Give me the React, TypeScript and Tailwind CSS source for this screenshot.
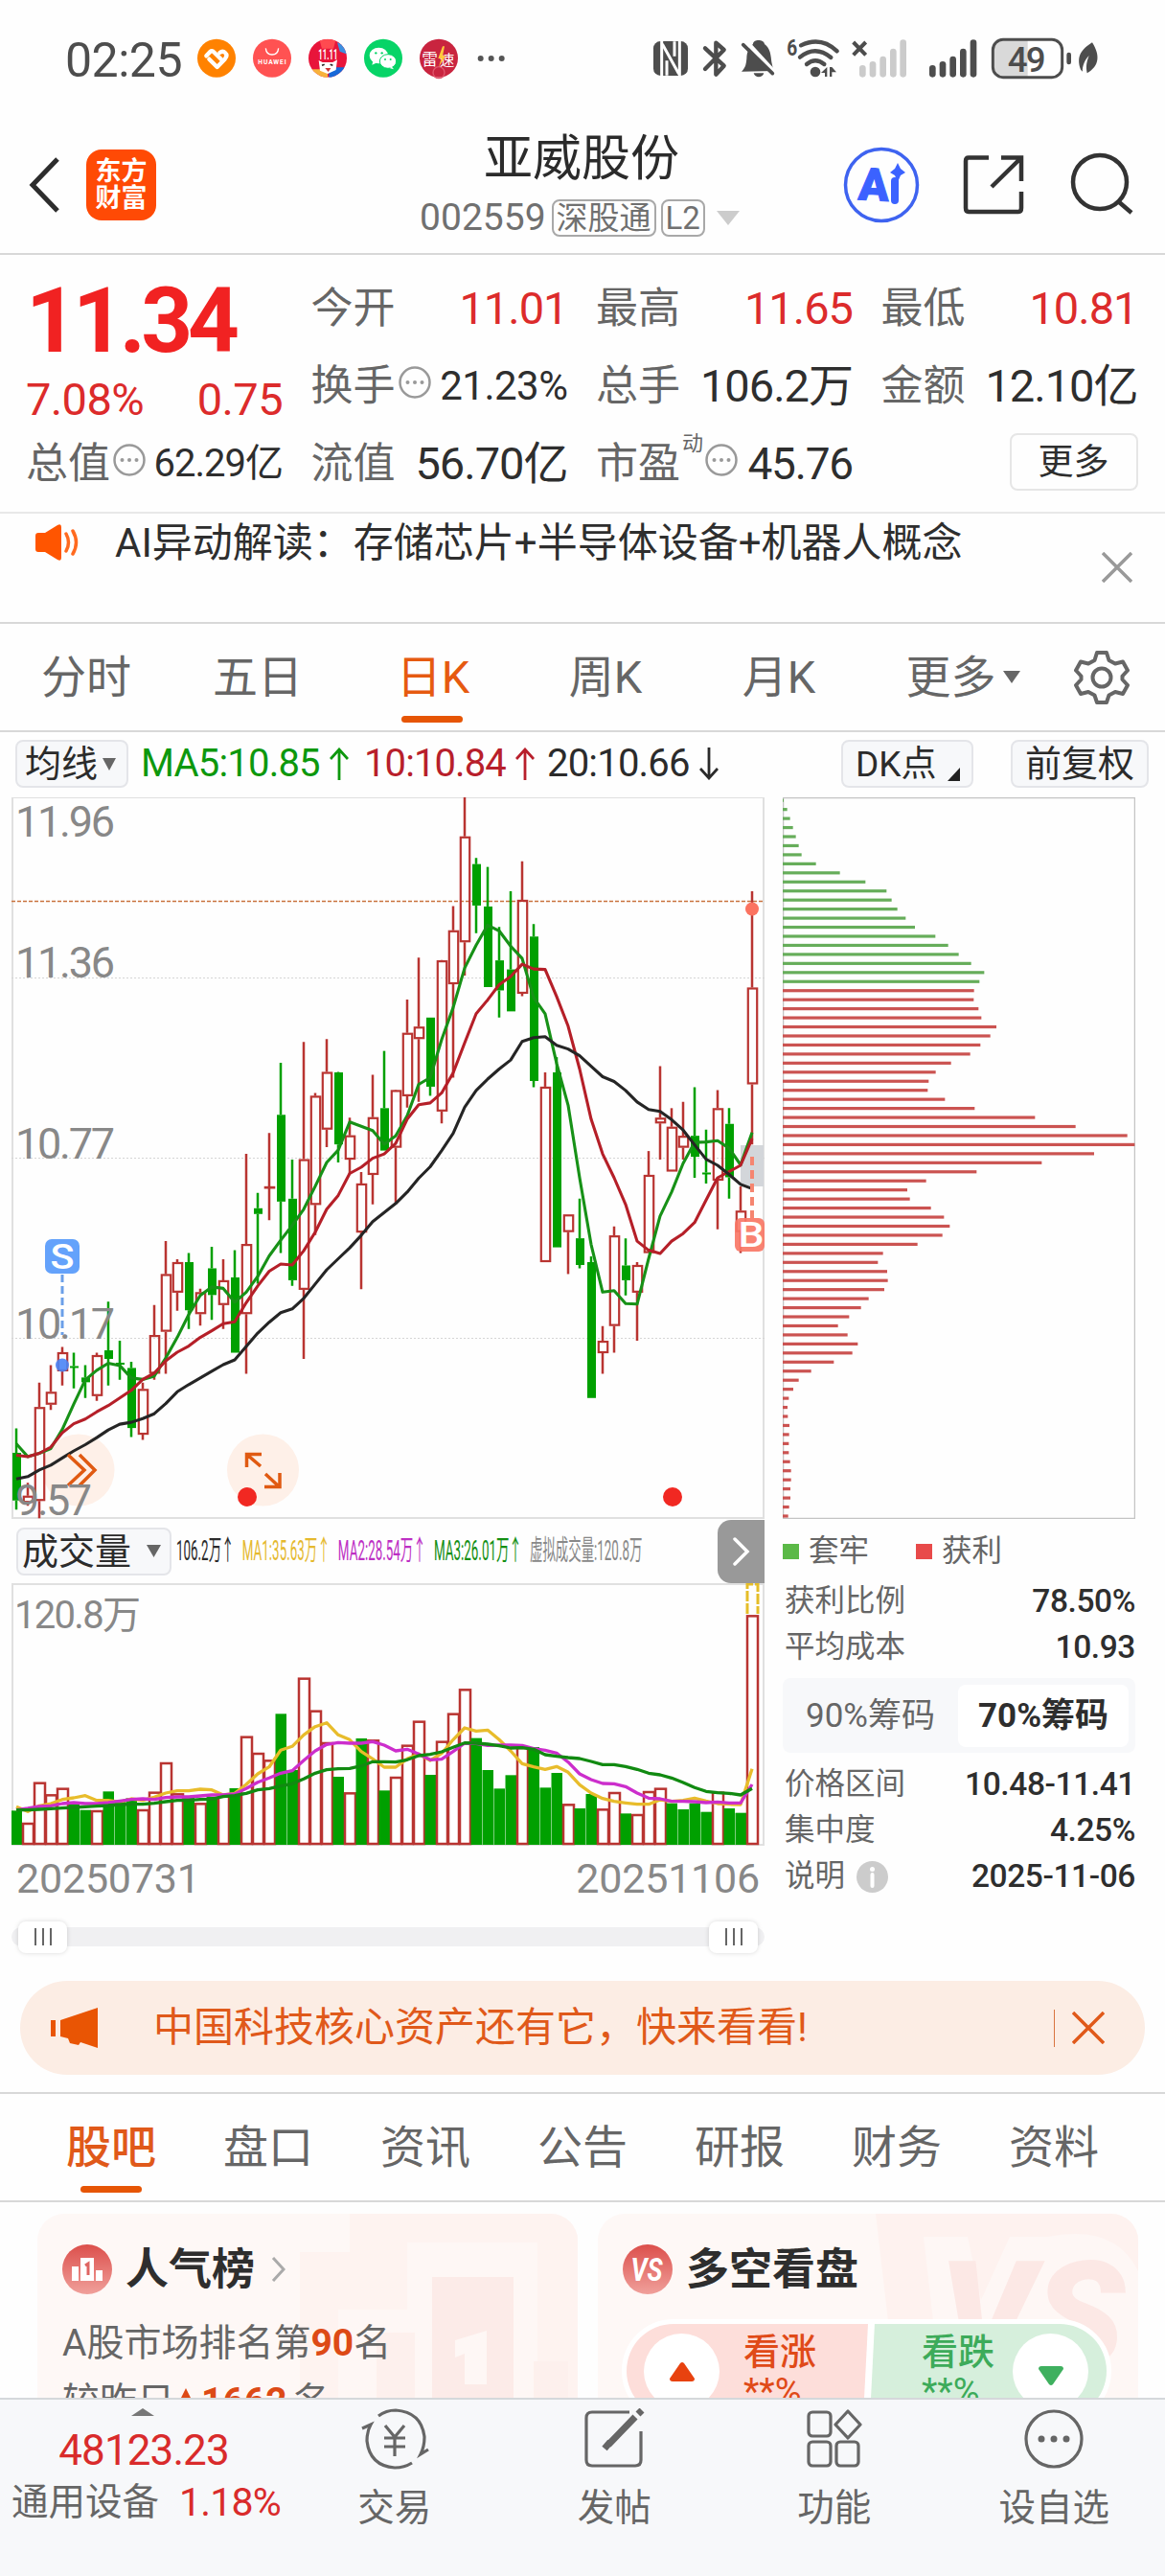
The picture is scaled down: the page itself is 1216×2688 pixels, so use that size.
import type { ReactNode } from "react"
import clsx from "clsx"

type Candle = [color: "R" | "G", high: number, top: number, bottom: number, low: number]

// high / body top / body bottom / low, measured on the 22..1534 price scale
const CANDLES: Candle[] = [
  ["G", 1346, 1397, 1497, 1516], ["R", 1460, 1487, 1502, 1508], ["R", 1250, 1301, 1498, 1534],
  ["R", 1213, 1269, 1296, 1307], ["R", 1175, 1186, 1226, 1256], ["G", 1187, 1215, 1218, 1262],
  ["G", 1213, 1239, 1249, 1282], ["R", 1187, 1192, 1278, 1288], ["G", 1080, 1182, 1200, 1256],
  ["G", 1162, 1208, 1212, 1244], ["G", 1206, 1219, 1345, 1364], ["R", 1250, 1263, 1359, 1370],
  ["R", 1087, 1150, 1231, 1244], ["R", 953, 1022, 1143, 1231], ["R", 991, 997, 1061, 1099],
  ["G", 978, 997, 1098, 1137], ["R", 1053, 1060, 1106, 1130], ["G", 965, 1010, 1066, 1118],
  ["R", 991, 1035, 1087, 1137], ["G", 972, 1029, 1187, 1187], ["R", 770, 959, 1106, 1231],
  ["G", 852, 884, 896, 1042], ["R", 726, 838, 840, 909], ["G", 579, 688, 870, 978],
  ["G", 782, 864, 1035, 1047], ["R", 535, 781, 1055, 1200], ["R", 642, 648, 877, 940],
  ["R", 529, 598, 719, 756], ["G", 598, 599, 750, 788], ["R", 694, 731, 782, 812],
  ["R", 808, 832, 935, 1054], ["R", 604, 693, 814, 876], ["G", 554, 674, 763, 763],
  ["R", 635, 636, 757, 872], ["R", 446, 516, 649, 673], ["R", 358, 503, 529, 661],
  ["G", 484, 484, 629, 648], ["R", 363, 364, 681, 706], ["R", 250, 301, 414, 610],
  ["R", 22, 104, 326, 396], ["G", 149, 162, 249, 307], ["G", 168, 251, 420, 420],
  ["G", 294, 364, 427, 484], ["G", 219, 383, 471, 471], ["R", 156, 237, 434, 439],
  ["G", 288, 314, 617, 630], ["R", 599, 629, 997, 997], ["G", 567, 599, 966, 966],
  ["R", 897, 897, 934, 1022], ["G", 864, 947, 1003, 1010], ["G", 985, 997, 1282, 1282],
  ["R", 1131, 1162, 1188, 1231], ["R", 922, 941, 1131, 1187], ["G", 947, 1004, 1035, 1067],
  ["R", 997, 1003, 1061, 1162], ["R", 764, 814, 978, 978], ["R", 586, 694, 706, 782],
  ["R", 674, 713, 807, 807], ["R", 661, 732, 757, 782], ["G", 630, 732, 776, 820],
  ["G", 719, 809, 812, 832], ["R", 636, 674, 826, 928], ["G", 674, 707, 819, 864],
  ["R", 838, 889, 934, 978], ["R", 219, 421, 624, 750],
]

const MA5 = [
  1378, 1405, 1398, 1388, 1348, 1295, 1244, 1224, 1209, 1214, 1240, 1243, 1236, 1198, 1155, 1107,
  1067, 1049, 1052, 1081, 1060, 1027, 984, 951, 920, 886, 838, 788, 762, 703, 712, 721, 750, 732,
  690, 624, 610, 530, 463, 380, 332, 290, 302, 334, 360, 442, 476, 580, 668, 820, 960, 1060, 1057,
  1084, 1085, 990, 900, 850, 790, 746, 745, 742, 758, 793, 725,
]
const MA10 = [
  1402, 1405, 1398, 1385, 1355, 1336, 1326, 1311, 1298, 1282, 1266, 1243, 1230, 1204, 1186, 1173,
  1155, 1141, 1126, 1122, 1082, 1047, 1016, 1001, 1003, 973, 934, 886, 857, 811, 798, 779, 770,
  748, 697, 667, 663, 642, 600, 537, 476, 447, 415, 398, 372, 382, 383, 440, 502, 592, 697, 770,
  820, 876, 953, 972, 979, 953, 937, 914, 867, 820, 807, 794, 738,
]
const MA20 = [
  1452, 1447, 1433, 1423, 1408, 1393, 1380, 1365, 1349, 1337, 1333, 1325, 1315, 1294, 1269, 1254,
  1240, 1226, 1212, 1202, 1174, 1146, 1123, 1103, 1095, 1073, 1043, 1013, 990, 967, 941, 912, 893,
  874, 850, 821, 797, 763, 727, 672, 637, 613, 592, 573, 534, 526, 524, 542, 550, 564, 586, 608,
  618, 637, 661, 677, 681, 698, 720, 751, 781, 794, 813, 834, 843,
]

const VOLUME_COLORS = "GRRRRGGRGGGRRRRGRGRGRRRGGRRRGRGRGRRRGRRRGGGGRGGGRGGRRGRRRGGGGRGGR"
const VOLUMES = [
  927, 965, 838, 876, 856, 900, 925, 926, 867, 897, 888, 923, 868, 776, 873, 886, 903, 884, 880,
  857, 694, 746, 768, 624, 800, 511, 613, 713, 821, 870, 701, 705, 864, 821, 721, 646, 815, 709,
  622, 546, 700, 800, 858, 816, 728, 728, 855, 809, 906, 920, 875, 921, 869, 936, 938, 866, 856,
  904, 923, 904, 931, 868, 920, 934, 315,
]
const VOL_MA1 = [
  915, 930, 912, 905, 892, 887, 880, 895, 895, 900, 890, 895, 885, 872, 865, 865, 860, 862, 878,
  873, 845, 812, 790, 738, 726, 690, 664, 652, 690, 705, 742, 765, 791, 791, 765, 750, 770, 748,
  705, 668, 678, 675, 705, 740, 780, 790, 798, 789, 807, 846, 872, 889, 898, 903, 907, 907, 893,
  898, 895, 888, 897, 905, 907, 908, 796,
]
const VOL_MA2 = [
  925, 920, 914, 912, 905, 902, 905, 905, 902, 897, 892, 890, 892, 886, 884, 884, 881, 878, 878,
  875, 858, 838, 825, 810, 802, 770, 740, 720, 714, 716, 716, 711, 722, 740, 735, 750, 768, 766,
  742, 716, 717, 723, 722, 722, 723, 733, 738, 747, 775, 812, 830, 842, 843, 852, 872, 888, 890,
  898, 898, 899, 902, 900, 903, 903, 845,
]
const VOL_MA3 = [
  925, 925, 923, 921, 919, 917, 915, 913, 911, 908, 907, 907, 904, 899, 895, 895, 892, 891, 883,
  880, 873, 862, 858, 850, 843, 828, 810, 799, 796, 795, 787, 774, 774, 775, 768, 755, 751, 743,
  729, 715, 716, 719, 724, 731, 730, 735, 752, 757, 761, 764, 773, 783, 783, 789, 798, 810, 815,
  825, 839, 855, 867, 871, 873, 878, 858,
]

// first 21 levels are above the current price
const CHIPS = [
  3, 14, 23, 32, 41, 50, 59, 104, 179, 259, 325, 341, 359, 385, 414, 478, 518, 551, 590, 631, 616,
  599, 598, 613, 622, 669, 650, 619, 587, 527, 479, 457, 454, 508, 601, 790, 917, 1079, 1102, 975,
  811, 607, 449, 390, 398, 464, 505, 523, 500, 422, 314, 298, 327, 329, 318, 269, 245, 208, 173,
  203, 235, 218, 160, 89, 50, 33, 19, 15, 16, 21, 20, 19, 19, 23, 26, 26, 24, 24, 20, 17,
]

const barX = (i: number) => 5 + 12 * i
const priceY = (v: number) => (v - 22) / 2.0103
const volumeY = (v: number) => (v - 215) / 3
const points = (values: number[], y: (v: number) => number) =>
  values.map((v, i) => `${barX(i)},${y(v).toFixed(1)}`).join(" ")

const RED = "#b93431"
const GREEN = "#00a000"

function Text({ className, children }: { className?: string; children: ReactNode }) {
  return <span className={clsx("whitespace-nowrap leading-none", className)}>{children}</span>
}

function StatusBar() {
  return (
    <div className="flex h-[122px] shrink-0 items-start justify-between pl-[68px] pr-[46px] pt-[30px]">
      <div className="flex h-[65px] items-center">
        <Text className="w-[132px] text-[50px] tracking-[-0.5px] text-[#4d4d4d]">02:25</Text>
        <svg width="340" height="55" viewBox="0 0 1020 165">
          <circle cx="78" cy="77" r="60" fill="#ff8200" />
          <g stroke="#fff" strokeWidth="13" strokeLinecap="round" strokeLinejoin="round" fill="none">
            <path d="M46 70L58 57Q64 52 71 59L96 84" />
            <path d="M55 80L80 105L104 80Q114 68 105 60Q97 52 88 60" />
          </g>
          <circle cx="252" cy="77" r="60" fill="#ff5252" />
          <path d="M232 46Q234 66 252 66Q270 66 272 46" fill="none" stroke="#fff" strokeWidth="4" />
          <text x="252" y="96" fill="#fff" fontSize="20" fontWeight="700" textAnchor="middle" textLength="88">HUAWEI</text>
          <clipPath id="sale"><circle cx="426" cy="77" r="60" /></clipPath>
          <g clipPath="url(#sale)">
            <rect x="366" y="17" width="120" height="120" fill="#e8153a" />
            <path d="M400 17h52l-8 30h-36z" fill="#ff4a50" />
            <path d="M456 28l34 14v24l-26-10z" fill="#3c8fe0" />
            <path d="M366 112h60v30h-60z" fill="#f7b23c" />
            <path d="M430 106h56v32h-56z" fill="#1668d8" />
            <path d="M398 84l12 6h32l14-8-4 32-26 12-24-10z" fill="#fff" />
            <path d="M408 100l8-3M434 97l8 3" stroke="#222" strokeWidth="5" />
            <path d="M418 108h18l-8 12z" fill="#c33" />
            <text x="427" y="80" fill="#fff" fontSize="42" fontWeight="700" textAnchor="middle" textLength="60" lengthAdjust="spacingAndGlyphs">11.11</text>
          </g>
          <circle cx="600" cy="77" r="60" fill="#07d467" />
          <ellipse cx="586" cy="69" rx="29" ry="25" fill="#fff" />
          <path d="M568 86l-3 12 13-6z" fill="#fff" />
          <ellipse cx="615" cy="87" rx="26" ry="22" fill="#fff" stroke="#07d467" strokeWidth="3" />
          <path d="M627 104l6 8-14-4z" fill="#fff" />
          <g fill="#07d467">
            <circle cx="577" cy="61" r="3.5" /><circle cx="596" cy="61" r="3.5" />
            <circle cx="606" cy="81" r="3" /><circle cx="623" cy="81" r="3" />
          </g>
          <circle cx="774" cy="77" r="60" fill="#c9243f" />
          <circle cx="774" cy="122" r="18" fill="none" stroke="#e0566c" strokeWidth="4" />
          <text x="746" y="98" fill="#fff" fontSize="50" textAnchor="middle" textLength="46">雷</text>
          <text x="800" y="98" fill="#fff" fontSize="46" textAnchor="middle" textLength="42">速</text>
          <path d="M786 40l-14 38h10l-8 26 22-34h-10l6-30z" fill="#ffc93c" />
          <g fill="#555"><circle cx="905" cy="78" r="9" /><circle cx="938" cy="78" r="9" /><circle cx="971" cy="78" r="9" /></g>
        </svg>
      </div>
      <svg width="500" height="65" viewBox="0 0 1500 195" fill="#4d4d4d">
        <rect x="36" y="39" width="108" height="108" rx="22" />
        <path d="M62 153V36M118 33V150" stroke="#fff" strokeWidth="9" />
        <path d="M64 48L116 142M78 100V146M102 40V86" stroke="#fff" strokeWidth="9" fill="none" />
        <path d="M198 61L257 116L232 143V44L257 66L198 126" fill="none" stroke="#4d4d4d" strokeWidth="13" strokeLinecap="round" strokeLinejoin="round" />
        <path d="M312 134c14-14 14-24 16-40 0-22 8-36 20-46 0-16 34-16 36 0 18 12 20 36 22 56l6 28zM350 139h32c-4 16-28 16-32 0z" />
        <path d="M330 44L418 140" stroke="#fff" strokeWidth="14" />
        <path d="M317 50L409 140" stroke="#4d4d4d" strokeWidth="11" strokeLinecap="round" />
        <text x="454" y="84" fontSize="72" fontWeight="700" textLength="33" lengthAdjust="spacingAndGlyphs">6</text>
        <g fill="none" stroke="#4d4d4d" strokeWidth="13" strokeLinecap="round">
          <path d="M498 52Q560 22 611 70" /><path d="M495 89Q543 50 592 90" /><path d="M516 111Q543 88 571 111" />
        </g>
        <circle cx="543" cy="135" r="16" />
        <path d="M580 120v30h-7v-12h-12zM588 120h7l14 16h-14v14h-7z" />
        <path d="M662 42L701 82M701 42L662 82" stroke="#4d4d4d" strokeWidth="12" />
        <g fill="#cbcbcb">
          <rect x="681" y="114" width="20" height="38" rx="10" /><rect x="713" y="102" width="20" height="50" rx="10" />
          <rect x="745" y="86" width="20" height="66" rx="10" /><rect x="777" y="62" width="20" height="90" rx="10" />
          <rect x="808" y="34" width="20" height="118" rx="10" />
        </g>
        <rect x="900" y="114" width="20" height="38" rx="10" /><rect x="932" y="102" width="20" height="50" rx="10" />
        <rect x="964" y="86" width="20" height="66" rx="10" /><rect x="996" y="62" width="20" height="90" rx="10" />
        <rect x="1028" y="34" width="20" height="118" rx="10" />
        <path d="M1130 35H1208V151H1130Q1100 151 1100 120V65Q1100 35 1130 35Z" fill="#d9d9d9" />
        <rect x="1099" y="34" width="217" height="118" rx="32" fill="none" stroke="#4d4d4d" strokeWidth="9" />
        <text x="1205" y="134" fontSize="110" fontWeight="500" textAnchor="middle" textLength="120">49</text>
        <rect x="1330" y="74" width="14" height="38" rx="7" />
        <path d="M1410 43C1380 62 1358 84 1374 128L1380 134C1378 118 1388 96 1400 84C1392 104 1390 118 1394 139C1432 118 1436 84 1410 43Z" />
      </svg>
    </div>
  )
}

function Header() {
  return (
    <div className="flex h-[144px] shrink-0 items-center border-b-2 border-[#d8d8d8]">
      <svg width="34" height="60" viewBox="0 0 34 60" className="ml-[29px]" fill="none" stroke="#2d2d2d" strokeWidth="5">
        <path d="M31 3L5 30L31 57" />
      </svg>
      <div className="ml-[27px] flex h-[74px] w-[73px] flex-col items-center justify-center gap-px rounded-2xl bg-[#ff4a05] font-bold text-white">
        <Text className="text-[27px]">东方</Text>
        <Text className="text-[27px]">财富</Text>
      </div>
      <div className="ml-[216px] flex w-[456px] flex-col items-center">
        <Text className="text-[51px] text-[#2b2b2b]">亚威股份</Text>
        <div className="mt-[17px] flex h-[39px] items-center text-[#707070]">
          <Text className="text-[39px]">002559</Text>
          <Text className="ml-[6px] rounded-lg border-2 border-[#a8a8a8] px-[3px] py-px text-[33px]">深股通</Text>
          <Text className="ml-[5px] rounded-lg border-2 border-[#a8a8a8] px-[3px] py-px text-[33px]">L2</Text>
          <svg width="24" height="15" className="ml-3 mr-[4px]"><path d="M0 0H24L12 15Z" fill="#ccc" /></svg>
        </div>
      </div>
      <svg width="310" height="84" viewBox="880 151 310 84" className="ml-[44px]" fill="none">
        <circle cx="921" cy="193" r="37.5" stroke="#3e63f0" strokeWidth="3.5" />
        <text x="897" y="209" fill="#3b62ff" stroke="#3b62ff" fontSize="47" fontWeight="900" transform="rotate(3 912 193)">A</text>
        <path d="M935 189v20" stroke="#3b62ff" strokeWidth="8" strokeLinecap="round" />
        <path d="M938 170l3 6 5 4-5 3-3 7-3-7-5-3 5-4z" fill="#3b62ff" />
        <path d="M1033 164.500H1012Q1009 164.500 1009 168V217Q1009 221 1012 221H1064Q1067 221 1067 217V200M1046 164.500H1067V189M1066 165.500L1036 195" stroke="#333" strokeWidth="4.500" />
        <circle cx="1149" cy="190" r="28" stroke="#333" strokeWidth="4.500" />
        <path d="M1168 210L1182 222" stroke="#333" strokeWidth="4.500" />
      </svg>
    </div>
  )
}

function MoreDots() {
  return (
    <svg width="34" height="34" className="shrink-0">
      <circle cx="17" cy="17" r="15.500" fill="none" stroke="#999" strokeWidth="2.500" />
      <g fill="#999"><circle cx="9.500" cy="17" r="2" /><circle cx="17" cy="17" r="2" /><circle cx="24.500" cy="17" r="2" /></g>
    </svg>
  )
}

type QuoteProps = { label: string; value: string; red?: boolean; dots?: boolean; valueSize?: string }

function Quote({ label, value, red, dots, valueSize = "text-[47px] tracking-[-1px]" }: QuoteProps) {
  return (
    <div className="flex h-[81px] items-center">
      <Text className="text-[44px] text-[#666]">{label}</Text>
      {dots && <div className="mb-2 ml-[3px]"><MoreDots /></div>}
      <Text className={clsx("ml-auto", valueSize, red ? "text-[#dc2b2b]" : "text-[#2e2e2e]")}>{value}</Text>
    </div>
  )
}

function QuotePanel() {
  return (
    <div className="flex h-[270px] shrink-0 gap-[29.500px] border-b-2 border-[#e8e8e8] pl-[27px] pt-[15px]">
      <div className="w-[268px]">
        <div className="flex h-[108px] items-center">
          <Text className="text-[94px] font-bold tracking-[-5px] text-[#f12222]">11.34</Text>
        </div>
        <div className="flex h-[54px] items-center justify-between text-[47px] tracking-[-0.6px] text-[#dc2b2b]">
          <Text>7.08%</Text>
          <Text>0.75</Text>
        </div>
        <Quote label="总值" value="62.29亿" dots valueSize="text-[40px] tracking-[-1px]" />
      </div>
      <div className="w-[268px]">
        <Quote label="今开" value="11.01" red />
        <Quote label="换手" value="21.23%" dots valueSize="text-[42px] tracking-[-0.5px]" />
        <Quote label="流值" value="56.70亿" />
      </div>
      <div className="w-[268px]">
        <Quote label="最高" value="11.65" red />
        <Quote label="总手" value="106.2万" />
        <div className="flex h-[81px] items-center">
          <Text className="text-[44px] text-[#666]">市盈</Text>
          <Text className="mb-[42px] ml-[2px] text-[22px] text-[#666]">动</Text>
          <div className="mb-2 ml-[2px]"><MoreDots /></div>
          <Text className="ml-auto text-[46px] tracking-[-1.2px] text-[#2e2e2e]">45.76</Text>
        </div>
      </div>
      <div className="w-[268px]">
        <Quote label="最低" value="10.81" red />
        <Quote label="金额" value="12.10亿" />
        <div className="flex h-[81px] items-center justify-end">
          <button className="mb-[3px] flex h-[60px] w-[134px] items-center justify-center rounded-lg border-2 border-[#e6e6e6]">
            <Text className="text-[37px] text-[#2e2e2e]">更多</Text>
          </button>
        </div>
      </div>
    </div>
  )
}

function Notice() {
  return (
    <div className="flex h-[115px] shrink-0 items-start border-b-2 border-[#d8d8d8] pl-[37px]">
      <svg width="46" height="38" viewBox="0 0 46 38" className="mt-[11px]">
        <path d="M0 12Q0 9 3 9H10L23 1Q27 -1 27 3V35Q27 39 23 37L10 29H3Q0 29 0 26Z" fill="#ff5500" />
        <path d="M32 10Q37 19 32 28M39 7Q46 19 39 31" fill="none" stroke="#ff6a1f" strokeWidth="3.500" strokeLinecap="round" />
      </svg>
      <Text className="ml-[37px] mt-[10px] text-[42px] text-[#2e2e2e]">AI异动解读：存储芯片+半导体设备+机器人概念</Text>
      <svg width="32" height="32" className="ml-auto mr-[34px] mt-[40px]"><path d="M1 1L31 31M31 1L1 31" stroke="#999" strokeWidth="3.500" /></svg>
    </div>
  )
}

function PeriodTabs() {
  return (
    <div className="flex h-[113px] shrink-0 items-center border-b-2 border-[#d8d8d8] text-[47px] text-[#666]">
      <Text className="w-[180px] text-center">分时</Text>
      <Text className="w-[178px] text-center">五日</Text>
      <div className="relative flex h-full w-[184px] items-center justify-center text-[#e65a10]">
        <Text className="pl-1">日K</Text>
        <div className="absolute bottom-[8px] left-[61px] h-[7px] w-[64px] rounded-full bg-[#e65505]" />
      </div>
      <Text className="w-[180px] text-center">周K</Text>
      <Text className="w-[182px] text-center">月K</Text>
      <div className="flex w-[202px] items-center justify-center gap-[7px]">
        <Text>更多</Text>
        <svg width="18" height="13"><path d="M0 0H18L9 13Z" fill="#666" /></svg>
      </div>
      <svg width="58" height="58" viewBox="0 0 58 58" className="ml-[15px]" fill="none" stroke="#666" strokeWidth="4" strokeLinejoin="round">
        <path d="M24 3H34L36.500 11L43 14.500L51 12.500L56 21.500L50.500 27.500V31L56 37L51 46L43 44L36.500 47.500L34 55H24L21.500 47.500L15 44L7 46L2 37L7.500 31V27.500L2 21.500L7 12.500L15 14.500L21.500 11Z" />
        <circle cx="29" cy="29" r="9.500" />
      </svg>
    </div>
  )
}

const chip = "flex items-center rounded-lg border-2 border-[#e4e5e9] bg-[#f7f8fa] text-[#2b2b2b]"

function Arrow({ down }: { down?: boolean }) {
  return (
    <svg width="20" height="34" viewBox="0 0 20 34" className={clsx("ml-[10px]", down && "rotate-180")} fill="none" stroke="currentColor" strokeWidth="2.800">
      <path d="M10 34V2M1 12L10 2L19 12" />
    </svg>
  )
}

function AverageRow() {
  return (
    <div className="flex h-[68px] shrink-0 items-center pb-[2px] pl-[16px]">
      <div className={clsx(chip, "h-[50px] w-[118px] pl-[8px]")}>
        <Text className="text-[38px]">均线</Text>
        <svg width="14" height="13" className="ml-[5px]"><path d="M0 0H14L7 13Z" fill="#666" /></svg>
      </div>
      <div className="ml-[13px] flex w-[233px] items-center text-[#0d980d]">
        <Text className="text-[40px] tracking-[-0.8px]">MA5:10.85</Text><Arrow />
      </div>
      <div className="flex w-[191px] items-center text-[#b81f2b]">
        <Text className="text-[40px] tracking-[-0.9px]">10:10.84</Text><Arrow />
      </div>
      <div className="flex w-[307px] items-center text-[#2b2b2b]">
        <Text className="text-[40px] tracking-[-0.8px]">20:10.66</Text><Arrow down />
      </div>
      <div className={clsx(chip, "h-[50px] w-[138px] pl-[13px]")}>
        <Text className="text-[37px]">DK点</Text>
        <svg width="13" height="14" className="ml-[11px] mt-[22px]"><path d="M13 0V14H0Z" fill="#222" /></svg>
      </div>
      <div className={clsx(chip, "ml-[39px] h-[50px] w-[144px] justify-center")}>
        <Text className="text-[38px]">前复权</Text>
      </div>
    </div>
  )
}

function CandleShape({ candle, x }: { candle: Candle; x: number }) {
  const [color, high, top, bottom, low] = candle
  const [h, t, b, l] = [high, top, bottom, low].map(priceY)
  const stroke = color === "R" ? RED : GREEN
  return (
    <g stroke={stroke}>
      <path d={`M${x} ${h}V${t}M${x} ${b}V${l}`} strokeWidth="2.500" />
      {color === "R" ? (
        <rect x={x - 4.2} y={t + 1} width="9.4" height={Math.max(b - t - 2, 0.5)} fill="none" strokeWidth="2.200" />
      ) : (
        <rect x={x - 4} y={t} width="9" height={Math.max(b - t, 2)} fill={GREEN} stroke="none" />
      )}
    </g>
  )
}

function PriceChart() {
  return (
    <svg width="786" height="753" viewBox="0 0 786 753" fill="none">
      <rect x="1" y="0" width="784" height="752" stroke="#e0e0e0" strokeWidth="2" />
      <g stroke="#d5d5d5" strokeDasharray="2 2">
        <path d="M0 188.500H786M0 376.500H786M0 564.500H786" />
      </g>
      <path d="M0 108.500H786" stroke="#c9733f" strokeWidth="1.300" strokeDasharray="4 2" />
      <rect x="761" y="363" width="24" height="43" fill="#d3d6da" />
      <circle cx="70" cy="702" r="37.500" fill="#fef0e8" />
      {CANDLES.map((c, i) => <CandleShape key={i} candle={c} x={barX(i)} />)}
      <g strokeWidth="3.100" strokeLinejoin="round">
        <polyline points={points(MA5, priceY)} stroke="#179117" />
        <polyline points={points(MA10, priceY)} stroke="#b51f28" />
        <polyline points={points(MA20, priceY)} stroke="#252525" />
      </g>
      <path d="M59 686L76 702L59 718M71 686L87 702L71 718" stroke="#e05a12" strokeWidth="3.500" />
      <circle cx="262.500" cy="702" r="37.500" fill="#fef0e8" />
      <path d="M261 685.500H245.500V699M246 686L260 698M280 705V719.500H264M279 719L265 706" stroke="#e05a12" strokeWidth="3.500" />
      <circle cx="246" cy="730" r="10" fill="#f12822" />
      <circle cx="690" cy="730" r="10" fill="#f12822" />
      <g fill="#888" fontSize="45">
        <text x="4" y="41" textLength="104">11.96</text>
        <text x="4" y="188" textLength="104">11.36</text>
        <text x="4" y="377" textLength="104">10.77</text>
        <text x="4" y="565" textLength="104">10.17</text>
        <text x="4" y="749" textLength="80">9.57</text>
      </g>
      <rect x="35" y="461" width="36" height="36" rx="7" fill="#64a2fb" />
      <text x="53" y="492" fontSize="37" fontWeight="500" fill="#fff" textAnchor="middle" textLength="25" lengthAdjust="spacingAndGlyphs">S</text>
      <path d="M53 498V561" stroke="#6b9fe8" strokeWidth="3" strokeDasharray="8 4" />
      <circle cx="53" cy="592.500" r="7" fill="#4a84f5" fillOpacity="0.900" />
      <circle cx="773" cy="116.500" r="7" fill="#fb7360" />
      <path d="M773 375V439" stroke="#f58570" strokeWidth="4" strokeDasharray="9 5" />
      <rect x="755" y="439" width="31" height="35" rx="6" fill="#f97766" fillOpacity="0.920" />
      <text x="772" y="469" fontSize="36" fontWeight="500" fill="#fff" textAnchor="middle" textLength="27" lengthAdjust="spacingAndGlyphs">B</text>
    </svg>
  )
}

function VolumeChart() {
  return (
    <svg width="786" height="274" viewBox="0 0 786 274" fill="none">
      <rect x="1" y="1" width="784" height="272" stroke="#e0e0e0" strokeWidth="2" />
      {VOLUMES.map((v, i) => {
        const y = volumeY(v)
        return VOLUME_COLORS[i] === "R" ? (
          <rect key={i} x={barX(i) - 5} y={y + 1} width="11" height={271 - y} fill="#fff" stroke={RED} strokeWidth="2.500" />
        ) : (
          <rect key={i} x={barX(i) - 5.5} y={y} width="11.5" height={273 - y} fill={GREEN} />
        )
      })}
      <path d="M768 32V1H779V32" stroke="#e5bd28" strokeWidth="3" strokeDasharray="11 2" />
      <g strokeWidth="3.300" strokeLinejoin="round">
        <polyline points={points(VOL_MA1, volumeY)} stroke="#e8bc2b" />
        <polyline points={points(VOL_MA2, volumeY)} stroke="#cc2ecc" />
        <polyline points={points(VOL_MA3, volumeY)} stroke="#118a11" />
      </g>
      <text x="3" y="47" fontSize="40" fill="#888" textLength="132">120.8万</text>
    </svg>
  )
}

function SliderHandle() {
  return (
    <div className="flex h-[33px] w-[51px] items-center justify-center gap-[6px] rounded-lg bg-white shadow-[0_0_5px_rgba(0,0,0,0.15)]">
      <div className="h-[18px] w-[2px] bg-[#666]" />
      <div className="h-[18px] w-[2px] bg-[#666]" />
      <div className="h-[18px] w-[2px] bg-[#666]" />
    </div>
  )
}

function ChipRow({ label, value }: { label: ReactNode; value: string }) {
  return (
    <div className="flex h-[48px] items-center justify-between">
      <Text className="flex items-center pl-[2px] text-[31.500px] text-[#666]">{label}</Text>
      <Text className="text-[33.500px] font-medium tracking-[-0.4px] text-[#2e2e2e]">{value}</Text>
    </div>
  )
}

function ChipPanel() {
  return (
    <div className="w-[368px]">
      <svg width="368" height="753" viewBox="0 0 368 753" className="block">
        <rect x="0.500" y="0.500" width="367" height="752" fill="none" stroke="#c4c4c4" strokeWidth="1.500" />
        {CHIPS.map((w, i) => (
          <rect key={i} x="0" y={1.6 + i * 9.453} width={w / 3} height="3.2" fill={i < 21 ? "#66ad5a" : "#cb5351"} />
        ))}
      </svg>
      <div className="flex h-[62px] items-center pt-[5px] text-[31.500px] text-[#666]">
        <div className="mr-[10px] h-[16px] w-[17px] bg-[#5bb947]" />
        <Text>套牢</Text>
        <div className="ml-[49px] mr-[10px] h-[16px] w-[17px] bg-[#e84a4a]" />
        <Text>获利</Text>
      </div>
      <ChipRow label="获利比例" value="78.50%" />
      <ChipRow label="平均成本" value="10.93" />
      <div className="mb-[9px] mt-[8px] flex h-[78px] items-center rounded-lg bg-[#f7f8fa]">
        <Text className="w-[183px] text-center text-[35px] text-[#666]">90%筹码</Text>
        <div className="flex h-[65px] w-[178px] items-center justify-center rounded-lg bg-white">
          <Text className="text-[35px] font-bold text-[#2e2e2e]">70%筹码</Text>
        </div>
      </div>
      <ChipRow label="价格区间" value="10.48-11.41" />
      <ChipRow label="集中度" value="4.25%" />
      <ChipRow
        label={
          <>
            说明
            <svg width="33" height="33" className="ml-[12px]">
              <circle cx="16.500" cy="16.500" r="16.500" fill="#ccc" />
              <path d="M16.500 14V26" stroke="#fff" strokeWidth="4" strokeLinecap="round" />
              <circle cx="16.500" cy="8.500" r="2.500" fill="#fff" />
            </svg>
          </>
        }
        value="2025-11-06"
      />
    </div>
  )
}

function Charts() {
  return (
    <div className="flex h-[1235px] shrink-0 gap-[19px] pl-[12px]">
      <div className="w-[786px]">
        <div className="h-[753px]"><PriceChart /></div>
        <div className="flex h-[67px] items-center">
          <div className={clsx(chip, "ml-[5px] h-[50px] w-[162px] shrink-0 pl-[4px]")}>
            <Text className="text-[38px]">成交量</Text>
            <svg width="15" height="13" className="ml-[16px]"><path d="M0 0H15L7.500 13Z" fill="#666" /></svg>
          </div>
          <div className="ml-[5px] flex w-[565px] shrink-0">
            <div className="flex origin-left scale-x-[0.462] gap-[18px] text-[29px]">
              <Text className="text-[#2b2b2b]">106.2万↑</Text>
              <Text className="text-[#e5b92e]">MA1:35.63万↑</Text>
              <Text className="text-[#bd2fc4]">MA2:28.54万↑</Text>
              <Text className="text-[#138f13]">MA3:26.01万↑</Text>
              <Text className="text-[#888]">虚拟成交量:120.8万</Text>
            </div>
          </div>
          <div className="flex h-[66px] w-[49px] shrink-0 items-center justify-center rounded-l-[14px] bg-[#999]">
            <svg width="18" height="30"><path d="M2 2L15 15L2 28" fill="none" stroke="#fff" strokeWidth="3.500" strokeLinecap="round" /></svg>
          </div>
        </div>
        <div className="h-[274px]"><VolumeChart /></div>
        <div className="flex h-[68px] items-center justify-between px-[5px] text-[43px] tracking-[-0.2px] text-[#888]">
          <Text>20250731</Text>
          <Text>20251106</Text>
        </div>
        <div className="mt-[17px] flex h-[20px] items-center justify-between rounded-full bg-[#f0f0f2] px-[7px]">
          <SliderHandle />
          <SliderHandle />
        </div>
      </div>
      <ChipPanel />
    </div>
  )
}

function Banner() {
  return (
    <div className="flex h-[118px] shrink-0 items-start border-b-2 border-[#d8d8d8]">
      <div className="ml-[21px] flex h-[98px] w-[1174px] items-center rounded-full bg-[#fcede4] text-[#e0591a]">
        <svg width="49" height="42" className="ml-[32px]" fill="#e95504">
          <path d="M0 13H5V30H0ZM10 13L49 0V42L31 36L29 39L20 37L18 32L10 30Z" />
        </svg>
        <Text className="ml-[58px] text-[42px]">中国科技核心资产还有它，快来看看!</Text>
        <div className="ml-auto h-[39px] w-px bg-[#d9753f]" />
        <svg width="34" height="34" className="ml-[18px] mr-[42px]"><path d="M1 1L33 33M33 1L1 33" stroke="#e0591a" strokeWidth="3.500" /></svg>
      </div>
    </div>
  )
}

function SectionTabs() {
  const tabs = ["股吧", "盘口", "资讯", "公告", "研报", "财务", "资料"]
  return (
    <div className="flex h-[113px] shrink-0 border-b-2 border-[#d8d8d8] px-[34px] text-[47px] text-[#666]">
      {tabs.map((tab, i) => (
        <div key={tab} className={clsx("relative flex flex-1 items-center justify-center", i === 0 && "font-medium text-[#e0591a]")}>
          <Text>{tab}</Text>
          {i === 0 && <div className="absolute bottom-[8px] h-[7px] w-[64px] rounded-full bg-[#e65505]" />}
        </div>
      ))}
    </div>
  )
}

function Cards() {
  return (
    <div className="flex h-[204px] shrink-0 gap-[21px] overflow-hidden pl-[39px] pt-[12px]">
      <div className="relative h-[260px] w-[564px] shrink-0 overflow-hidden rounded-[28px] bg-[#fef8f6] pl-[26px] pt-[32px]">
        <svg width="300" height="260" className="absolute right-0 top-0">
          <path d="M62 0H300V260H10V40H62Z" fill="#fef3f0" />
          <path d="M122 30H258V260H50V100H122Z" fill="#fef7f5" />
          <path d="M148 66H233V260H148Z" fill="#fcebe8" />
          <path d="M90 124H130V260H90ZM254 154H290V260H254Z" fill="#fdf0ed" />
          <path d="M172 132L205 122V178H182V146L172 150Z" fill="#fef7f5" />
        </svg>
        <div className="relative flex h-[52px] items-center">
          <svg width="52" height="52">
            <defs><linearGradient id="badge" x2="0" y2="1"><stop stopColor="#dc4f4b" /><stop offset="1" stopColor="#f0a09b" /></linearGradient></defs>
            <circle cx="26" cy="26" r="26" fill="url(#badge)" />
            <path d="M10 23H17V38H10ZM19 14H33V38H19ZM35 27H42V38H35Z" fill="#fff" />
            <path d="M24 22L27 20V32" fill="none" stroke="#df6562" strokeWidth="3" />
          </svg>
          <Text className="ml-[14px] text-[45px] font-bold text-[#2e2e2e]">人气榜</Text>
          <svg width="15" height="26" className="ml-[17px]"><path d="M2 1L13 13L2 25" fill="none" stroke="#aaa" strokeWidth="3" /></svg>
        </div>
        <div className="relative mt-[30px] flex h-[42px] items-center text-[39px] text-[#666]">
          <Text>A股市场排名第<span className="font-bold text-[#dd4a16]">90</span>名</Text>
        </div>
        <div className="relative mt-[19px] flex h-[42px] items-center text-[39px] text-[#666]">
          <Text>较昨日</Text>
          <svg width="20" height="28" className="mx-[2px]"><path d="M10 0L20 20H14V28H6V20H0Z" fill="#dd4a16" /></svg>
          <Text className="mr-[6px] pl-[4px] font-bold text-[#dd4a16]">1662</Text>
          <Text>名</Text>
        </div>
      </div>
      <div className="relative h-[260px] w-[564px] shrink-0 overflow-hidden rounded-[28px] bg-[#fef8f6] pt-[32px]">
        <svg width="274" height="260" className="absolute right-0 top-0">
          <path d="M0 0H274V260H30Z" fill="#fef2ef" />
          <path d="M50 24H96L110 90L140 24H180Q250 10 274 60V200H70Z" fill="#fef7f5" />
          <text x="66" y="160" fontSize="155" fontWeight="900" fontStyle="italic" fill="#fce8e5" textLength="194" lengthAdjust="spacingAndGlyphs">VS</text>
        </svg>
        <div className="relative flex h-[52px] items-center pl-[26px]">
          <svg width="52" height="52">
            <circle cx="26" cy="26" r="26" fill="url(#badge)" />
            <text x="25" y="38" fontSize="33" fontWeight="700" fontStyle="italic" fill="#fff" textAnchor="middle" textLength="33" lengthAdjust="spacingAndGlyphs">VS</text>
          </svg>
          <Text className="ml-[14px] text-[45px] font-bold text-[#2e2e2e]">多空看盘</Text>
        </div>
        <div className="relative ml-[25px] mt-[26px] flex h-[108px] w-[511px] gap-[2px] rounded-full border-[5px] border-white bg-white">
          <div className="flex h-[98px] w-[252px] rounded-l-full bg-[#fddeda] pl-[18px] text-[#e04a18] [clip-path:polygon(0_0,100%_0,98%_100%,0_100%)]">
            <div className="mt-[10px] flex h-[79px] w-[79px] items-center justify-center rounded-full bg-white">
              <svg width="26" height="20"><path d="M11 1Q13 -1 15 1L26 17Q26 20 23 20H3Q0 20 0 17Z" fill="#e8420f" /></svg>
            </div>
            <div className="ml-[25px] mt-[10px] flex flex-col gap-[4px]">
              <Text className="text-[38px] font-medium">看涨</Text>
              <Text className="text-[38px]">**%</Text>
            </div>
          </div>
          <div className="flex h-[98px] flex-1 rounded-r-full bg-[#d6efdc] text-[#3dab5a] [clip-path:polygon(2%_0,100%_0,100%_100%,0_100%)]">
            <div className="ml-[54px] mt-[10px] flex w-[95px] flex-col gap-[4px]">
              <Text className="text-[38px] font-medium">看跌</Text>
              <Text className="text-[38px]">**%</Text>
            </div>
            <div className="mt-[10px] flex h-[79px] w-[79px] items-center justify-center rounded-full bg-white">
              <svg width="26" height="20" className="mt-[8px]"><path d="M11 19Q13 21 15 19L26 3Q26 0 23 0H3Q0 0 0 3Z" fill="#3fb05f" /></svg>
            </div>
          </div>
        </div>
      </div>
    </div>
  )
}

function NavItem({ label, children }: { label: string; children: ReactNode }) {
  return (
    <div className="flex w-[229.500px] flex-col items-center">
      <svg width="72" height="64" viewBox="0 0 72 64" className="mt-[9px]" fill="none" stroke="#666" strokeWidth="3.200">{children}</svg>
      <Text className="mt-[21px] text-[38.500px] text-[#666]">{label}</Text>
    </div>
  )
}

function BottomBar() {
  return (
    <div className="flex h-[187px] shrink-0 border-t-2 border-[#d5d8db] bg-[#f7f8fa]">
      <div className="flex w-[297px] flex-col items-center">
        <svg width="24" height="8" className="mt-[9px]"><path d="M12 0L24 8H0Z" fill="#777" /></svg>
        <Text className="mt-[14px] pl-[3px] text-[44px] tracking-[-0.9px] text-[#d92b2b]">48123.23</Text>
        <div className="mt-[12px] flex items-center self-start pl-[12px]">
          <Text className="text-[38.500px] text-[#666]">通用设备</Text>
          <Text className="ml-[21px] text-[41px] tracking-[-0.8px] text-[#d92b2b]">1.18%</Text>
        </div>
      </div>
      <NavItem label="交易">
        <path d="M19 8Q27 2 37 2Q64 4 67 30Q67 40 63 48L71 43M54 57Q46 62 36 62Q10 60 7 34Q7 24 11 17L2 21" />
        <path d="M26 18L36 30L46 18M36 30V50M25 31H47M25 40H47" />
      </NavItem>
      <NavItem label="发帖">
        <path d="M52 4H13Q7 4 7 10V54Q7 60 13 60H58Q64 60 64 54V24" />
        <path d="M30 38L58 9M26 42L32 35M61 6L65 2" strokeWidth="7" />
      </NavItem>
      <NavItem label="功能">
        <rect x="9" y="4" width="23" height="25" rx="4" />
        <rect x="9" y="35" width="23" height="25" rx="4" />
        <rect x="38" y="35" width="23" height="25" rx="4" />
        <path d="M50 3L63 17L50 31L37 17Z" strokeLinejoin="round" />
      </NavItem>
      <NavItem label="设自选">
        <circle cx="36" cy="32" r="29" />
        <g fill="#666" stroke="none"><circle cx="23" cy="32" r="3.500" /><circle cx="36" cy="32" r="3.500" /><circle cx="49" cy="32" r="3.500" /></g>
      </NavItem>
    </div>
  )
}

export default function App() {
  return (
    <div className="flex h-[2688px] w-[1216px] flex-col overflow-hidden bg-[#fefefe] font-[Roboto,'Noto_Sans_CJK_SC',sans-serif]">
      <StatusBar />
      <Header />
      <QuotePanel />
      <Notice />
      <PeriodTabs />
      <AverageRow />
      <Charts />
      <Banner />
      <SectionTabs />
      <Cards />
      <BottomBar />
    </div>
  )
}
